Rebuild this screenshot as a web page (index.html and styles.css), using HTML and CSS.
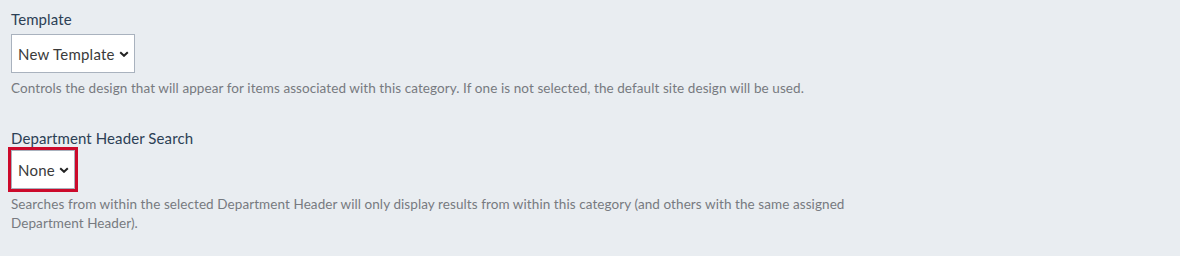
FILE: index.html
```html
<!DOCTYPE html>
<html lang="en">
<head>
<meta charset="utf-8">
<title>Category settings</title>
<link rel="stylesheet" href="styles.css">
</head>
<body>
<form class="form">
  <div class="field">
    <label class="label">Template</label>
    <div class="select" role="combobox">
      <span class="select-value">New Template</span>
      <svg class="chev" width="10" height="6" viewBox="0 0 10 6"><path d="M1.2 1.2L5 4.8l3.8-3.6" fill="none" stroke="#222" stroke-width="2"/></svg>
    </div>
    <p class="help">Controls the design that will appear for items associated with this category. If one is not selected, the default site design will be used.</p>
  </div>
  <div class="field field-second">
    <label class="label">Department Header Search</label>
    <div class="select select-highlight" role="combobox">
      <span class="select-value">None</span>
      <svg class="chev" width="10" height="6" viewBox="0 0 10 6"><path d="M1.2 1.2L5 4.8l3.8-3.6" fill="none" stroke="#222" stroke-width="2"/></svg>
    </div>
    <p class="help">Searches from within the selected Department Header will only display results from within this category (and others with the same assigned Department Header).</p>
  </div>
</form>
</body>
</html>
```

FILE: styles.css
```css
html, body {
  margin: 0;
  background: #e9edf1;
}
body {
  font-family: "Lato", "Open Sans", sans-serif;
  width: 1180px;
  height: 256px;
  overflow: hidden;
}
.form {
  padding: 9px 11px 0;
  display: flex;
  flex-direction: column;
  gap: 30px;
}
.field {
  display: flex;
  flex-direction: column;
  align-items: flex-start;
}
.label {
  font-size: 15px;
  line-height: 20px;
  letter-spacing: 0.1px;
  color: #2c4055;
  margin-bottom: 5px;
}
.field-second .label {
  margin-bottom: 2px;
}
.select {
  box-sizing: border-box;
  height: 39px;
  background: #fff;
  border: 1px solid #a9b2be;
  padding: 0 5px 0 6px;
  display: flex;
  align-items: center;
  gap: 4px;
  font-size: 15px;
  letter-spacing: 0.25px;
  color: #3a3a3a;
}
.select-highlight {
  outline: 3px solid #cc0a2b;
}
.chev {
  margin-top: 1px;
}
.help {
  margin: 6px 0 0;
  max-width: 860px;
  font-size: 13.5px;
  letter-spacing: 0.08px;
  line-height: 19px;
  color: #777a80;
}
```
